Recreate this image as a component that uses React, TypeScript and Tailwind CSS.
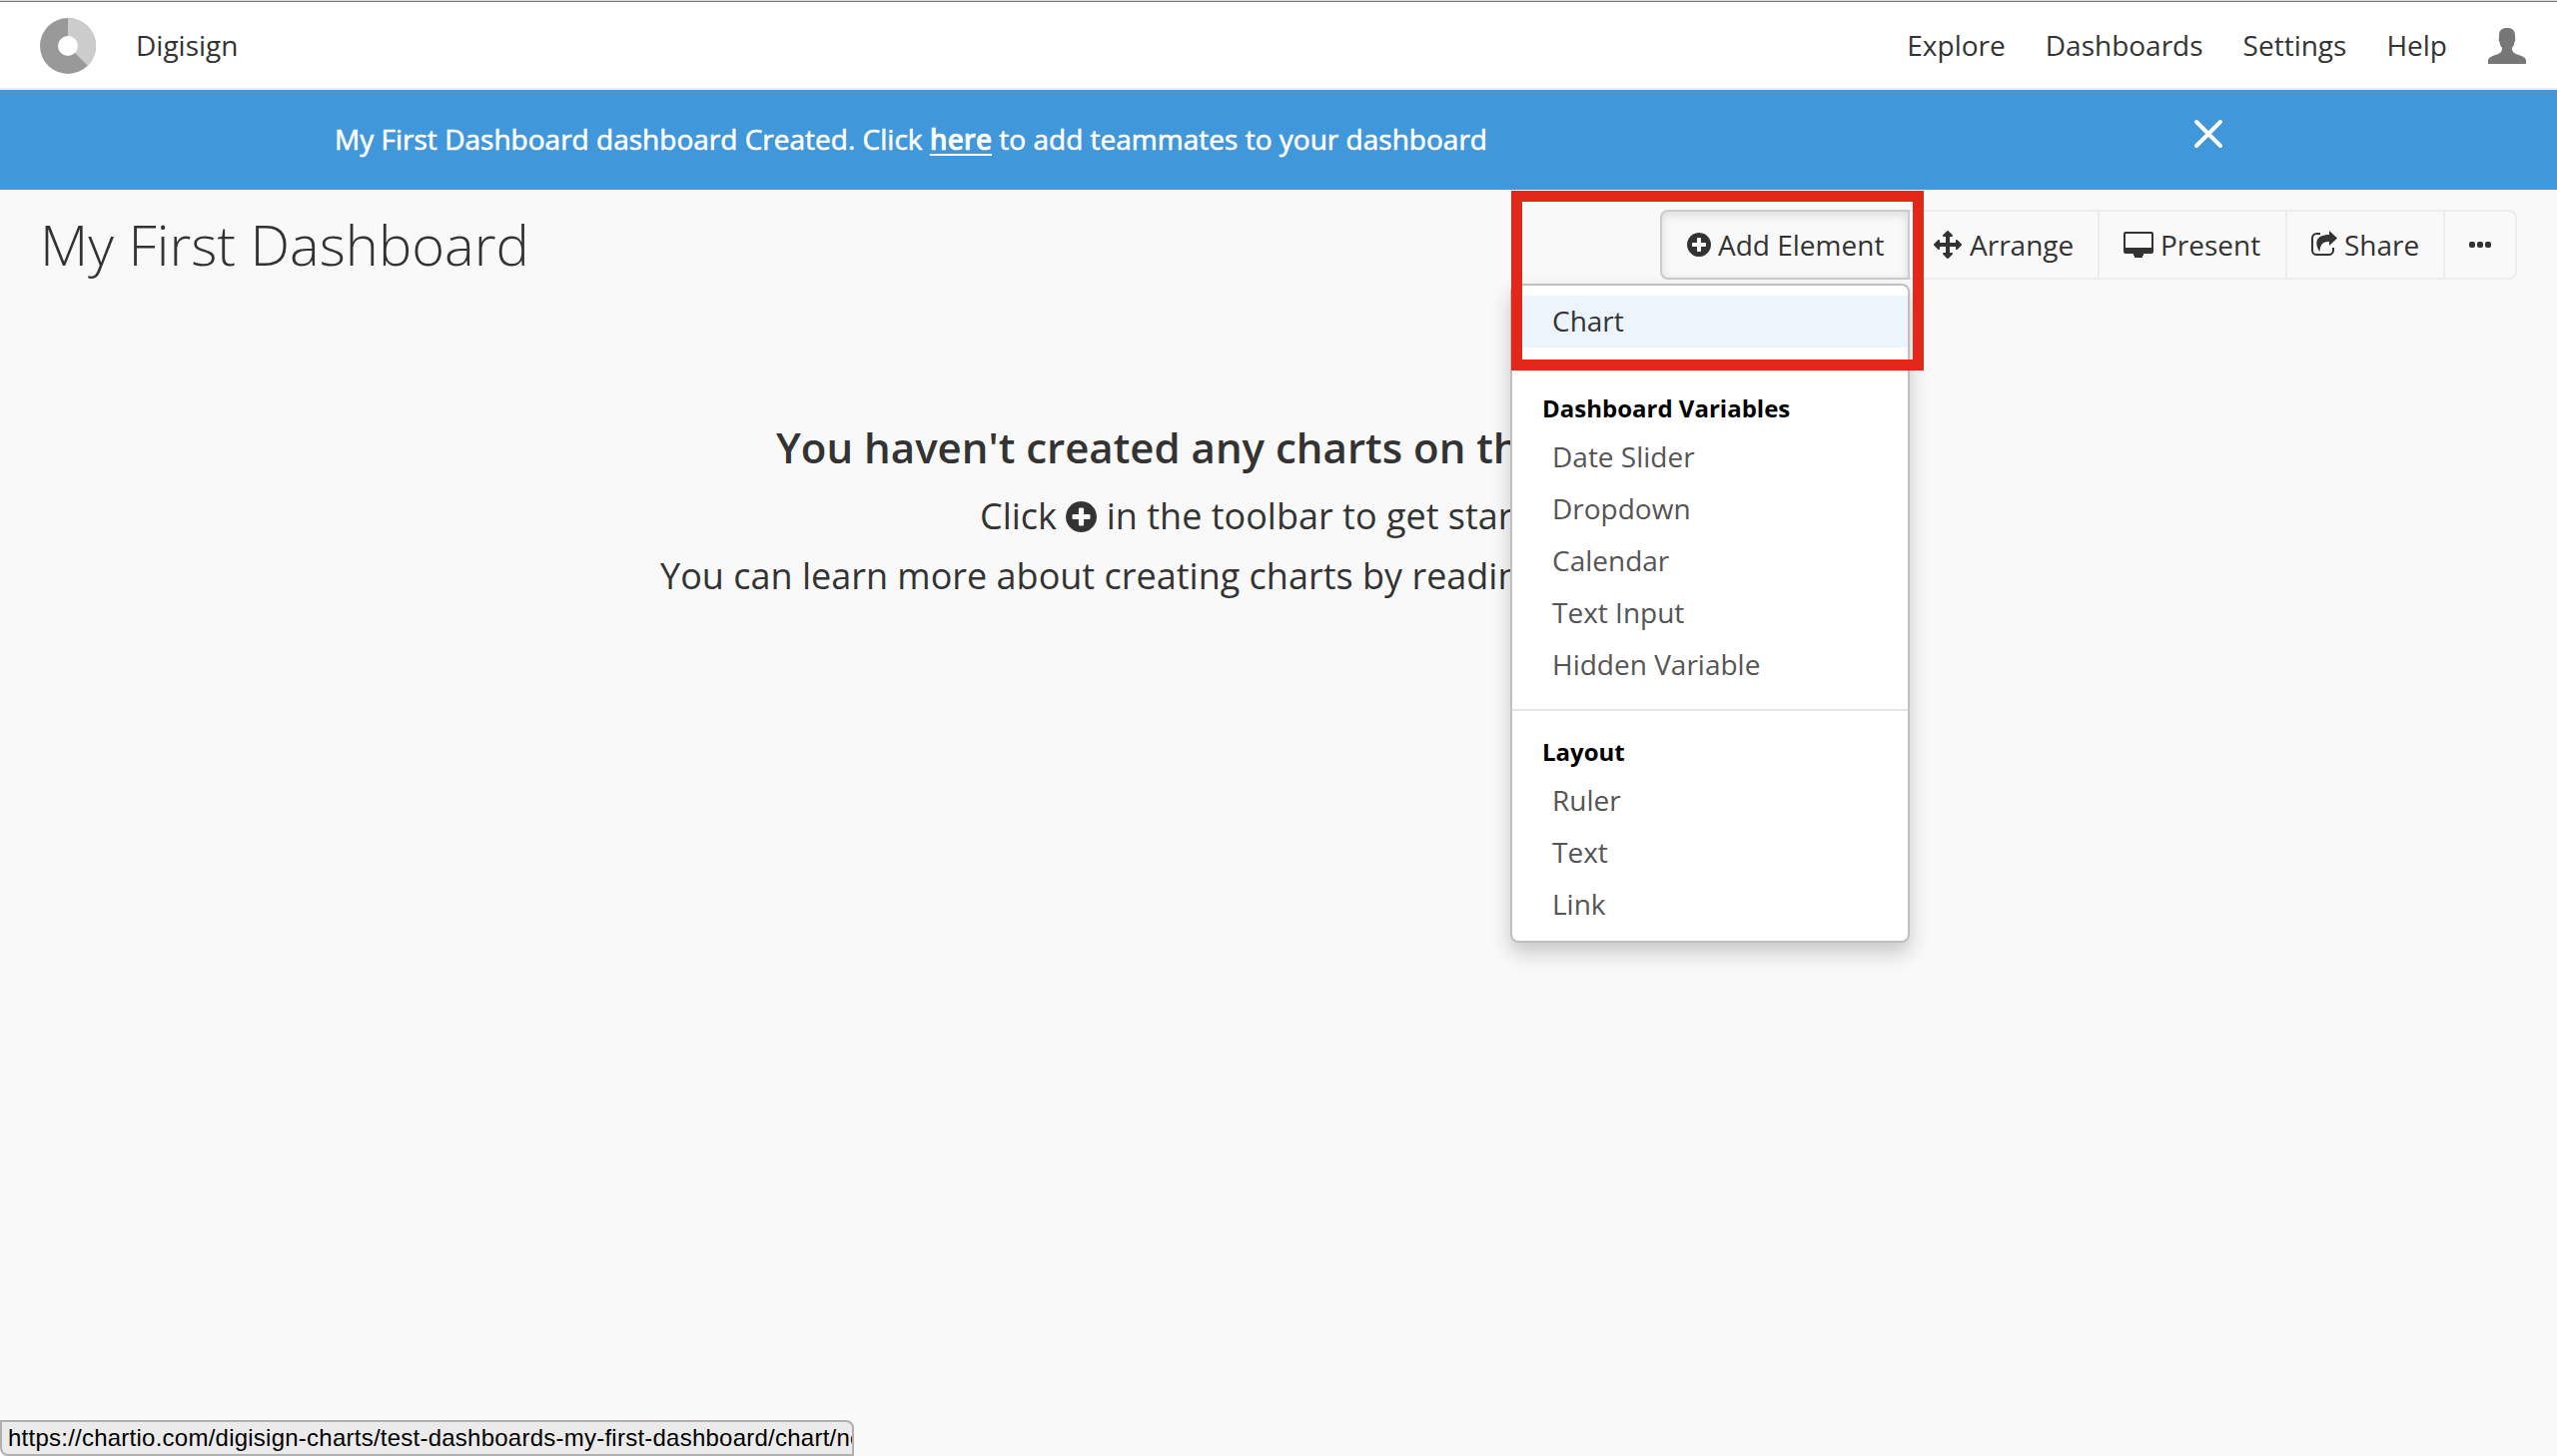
import React from "react";

const PLUS =
  "M1344 960v-128q0-26-19-45t-45-19h-256v-256q0-26-19-45t-45-19h-128q-26 0-45 19t-19 45v256h-256q-26 0-45 19t-19 45v128q0 26 19 45t45 19h256v256q0 26 19 45t45 19h128q26 0 45-19t19-45v-256h256q26 0 45-19t19-45zm320-64q0 209-103 385.5t-279.5 279.5-385.5 103-385.5-103-279.5-279.5-103-385.5 103-385.5 279.5-279.5 385.5-103 385.5 103 279.5 279.5 103 385.5z";
const ARROWS =
  "M1792 896q0 26-19 45l-256 256q-19 19-45 19t-45-19-19-45v-128h-384v384h128q26 0 45 19t19 45-19 45l-256 256q-19 19-45 19t-45-19l-256-256q-19-19-19-45t19-45 45-19h128v-384h-384v128q0 26-19 45t-45 19-45-19l-256-256q-19-19-19-45t19-45l256-256q19-19 45-19t45 19 19 45v128h384v-384h-128q-26 0-45-19t-19-45 19-45l256-256q19-19 45-19t45 19l256 256q19 19 19 45t-19 45-45 19h-128v384h384v-128q0-26 19-45t45-19 45 19l256 256q19 19 19 45z";

function Plus({ className }: { className: string }) {
  return (
    <svg className={className} viewBox="128 128 1536 1536" fill="currentColor">
      <path d={PLUS} />
    </svg>
  );
}

function Logo() {
  return (
    <svg className="mt-px ml-10 h-14 w-14" viewBox="0 0 56 56">
      <circle cx="28" cy="28" r="28" fill="#999" />
      <path d="M28 28V0a28 28 0 0 1 19.8 47.8z" fill="#ccc" />
      <circle cx="28" cy="28" r="10" fill="#fff" />
    </svg>
  );
}

function Heading({ children }: { children: string }) {
  return <div className="h-[46px] pl-[30px] text-[24px] leading-[48px] font-bold text-black">{children}</div>;
}

function Item({ children }: { children: string }) {
  return <div className="h-[52px] pl-[40px] text-[28px] leading-[52px] text-[#555]">{children}</div>;
}

export default function App() {
  return (
    <div className="relative flex h-[1458px] w-[2560px] flex-col overflow-hidden bg-[#f9f9f9] font-['Open_Sans',sans-serif] text-[28px] text-[#333]">
      <div className="h-px shrink-0 bg-[#dcdcdc]" />
      <div className="h-px shrink-0 bg-[#777]" />
      <header className="flex h-[88px] shrink-0 items-center border-b-2 border-[#eee] bg-white leading-[38px]">
        <Logo />
        <span className="-mt-px ml-[40px]">Digisign</span>
        <nav className="-mt-px ml-auto flex items-center gap-10">
          <a>Explore</a>
          <a>Dashboards</a>
          <a>Settings</a>
          <a>Help</a>
          <svg className="mt-[2px] mr-[31px] ml-px h-9 w-[38px]" viewBox="0 0 38 36" fill="#777">
            <path d="M19 0c-5.500 0-8 2.600-8 7.500v3c-.6.800-.4 2.600.6 3.700.3 2.500 1 4.300 2.500 5.600 0 3-.8 4.500-3 5.600C7.500 27.200 0 28.500 0 32.500V36h38v-3.500c0-4-7.500-5.300-11.100-7.100-2.200-1.100-3-2.600-3-5.600 1.500-1.300 2.200-3.100 2.500-5.600 1-1.100 1.200-2.900.6-3.700v-3C27 2.600 24.500 0 19 0z" />
          </svg>
        </nav>
      </header>

      <section className="flex h-[100px] shrink-0 items-center bg-[#4097d9] pl-[335px] text-white">
        <p className="pb-[2px] leading-[38px] tracking-[0.01px] [-webkit-text-stroke:0.6px_#fff]">
          My First Dashboard dashboard Created. Click <a className="font-semibold underline decoration-2 underline-offset-4">here</a> to add teammates to your dashboard
        </p>
        <svg className="mr-[334px] mb-3 ml-auto h-[30px] w-[30px]" viewBox="0 0 30 30" stroke="#fff" strokeWidth="4" strokeLinecap="round">
          <path d="M3 3l24 24M27 3L3 27" />
        </svg>
      </section>

      <div className="flex h-[110px] shrink-0 items-start justify-between pt-5 pr-10 pl-10">
        <h1 className="text-[56px] leading-[68px] font-light">My First Dashboard</h1>
        <div className="relative flex h-[70px]">
          <button className="flex w-[250px] items-center rounded-l-lg border-2 border-[#ccc] pl-[25px] shadow-[inset_0_3px_10px_rgba(0,0,0,0.12)]">
            <Plus className="mr-[7px] h-6 w-6" />
            Add Element
          </button>
          <button className="flex w-[190px] items-center border-y-2 border-r-2 border-[#ececec] pl-6">
            <svg className="mr-2 h-7 w-7" viewBox="0 0 1792 1792" fill="currentColor">
              <path d={ARROWS} />
            </svg>
            Arrange
          </button>
          <button className="flex w-[188px] items-center border-y-2 border-r-2 border-[#ececec] pl-6">
            <svg className="mr-[7px] h-[26px] w-[30px]" viewBox="0 0 30 26" fill="currentColor">
              <path fillRule="evenodd" d="M2 0h26a2 2 0 0 1 2 2v18a2 2 0 0 1-2 2h-8v2h-1v2h-8v-2h-1v-2H2a2 2 0 0 1-2-2V2a2 2 0 0 1 2-2zm0 2v14h26V2z" />
            </svg>
            Present
          </button>
          <button className="flex w-[158px] items-center border-y-2 border-r-2 border-[#ececec] pl-6">
            <svg className="mr-[7px] mb-[2px] h-[26px] w-[26px]" viewBox="0 0 26 26">
              <path d="M9 3H5.500A4.500 4.500 0 0 0 1 7.500v12A4.500 4.500 0 0 0 5.500 24h12a4.500 4.500 0 0 0 4.500-4.500V17" fill="none" stroke="currentColor" strokeWidth="2" />
              <path d="M18 0l8 7.500-8 7.500v-4C12 11 9 13 8.500 21 3 13 4 4 18 4z" fill="currentColor" />
            </svg>
            Share
          </button>
          <button className="flex w-[72px] items-center justify-center gap-[2px] rounded-r-lg border-y-2 border-r-2 border-[#ececec]">
            <i className="h-[6px] w-[6px] rounded-[2px] bg-[#333]" />
            <i className="h-[6px] w-[6px] rounded-[2px] bg-[#333]" />
            <i className="h-[6px] w-[6px] rounded-[2px] bg-[#333]" />
          </button>

          <div className="absolute top-[74px] left-[-150px] z-10 w-[400px] rounded-lg border-2 border-[#bfbfbf] bg-white shadow-[0_10px_20px_rgba(0,0,0,0.2)]">
            <div className="mt-[10px] mb-[37px] h-[52px] bg-[#edf5fc] pl-[40px] leading-[51px]">Chart</div>
            <Heading>Dashboard Variables</Heading>
            <Item>Date Slider</Item>
            <Item>Dropdown</Item>
            <Item>Calendar</Item>
            <Item>Text Input</Item>
            <Item>Hidden Variable</Item>
            <div className="mt-[19px] mb-[17px] h-[2px] bg-[#e5e5e5]" />
            <Heading>Layout</Heading>
            <Item>Ruler</Item>
            <Item>Text</Item>
            <Item>Link</Item>
            <div className="h-[11px]" />
          </div>
          <div className="absolute top-[-19px] left-[-149px] z-20 h-[180px] w-[413px] border-[11px] border-[#e32719]" />
        </div>
      </div>

      <main className="flex w-[2560px] flex-col items-center pt-[120px]">
        <h2 className="w-[1006px] text-[42px] leading-[56px] font-semibold whitespace-nowrap">You haven't created any charts on th</h2>
        <p className="mt-[11px] w-[598px] text-[36px] leading-[60px] whitespace-nowrap">
          Click <Plus className="inline h-[31px] w-[31px] align-[-3px]" /> in the toolbar to get star
        </p>
        <p className="w-[1238px] text-[36px] leading-[60px] whitespace-nowrap">You can learn more about creating charts by readin</p>
      </main>

      <footer className="mt-auto flex h-9 w-[855px] shrink-0 items-center overflow-hidden rounded-tr-lg rounded-bl-lg border-2 border-[#b0b0b0] bg-[#ebebeb] pl-[6px] font-['Liberation_Sans',sans-serif] text-[24px] tracking-[0.24px] whitespace-nowrap text-black">
        https://chartio.com/digisign-charts/test-dashboards-my-first-dashboard/chart/ne
      </footer>
    </div>
  );
}
